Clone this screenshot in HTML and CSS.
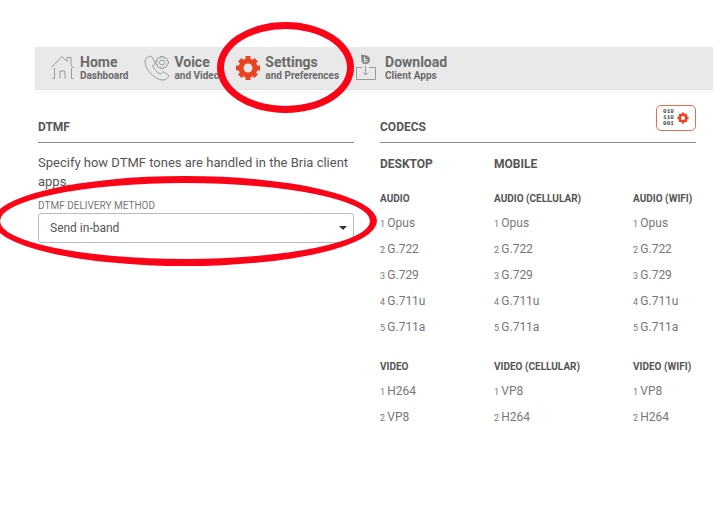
FILE: index.html
```
<!DOCTYPE html>
<html lang="en">
<head>
    <meta charset="UTF-8">
    <meta name="viewport" content="width=device-width, initial-scale=1.0">
    <title>Settings and Preferences</title>
    <link rel="stylesheet" href="styles.css">
</head>
<body>

<svg class="defs" aria-hidden="true">
    <symbol id="gear" viewBox="0 0 26 26">
        <g fill="none" stroke="currentColor">
            <circle cx="13" cy="13" r="7" stroke-width="5"/>
            <path stroke-width="5" d="M13 1v4M13 21v4M1 13h4M21 13h4"/>
            <path stroke-width="5" d="M4.800 4.800l2.500 2.500M18.700 18.700l2.500 2.500M21.200 4.800l-2.500 2.500M7.300 18.700l-2.500 2.500"/>
        </g>
    </symbol>
</svg>

<nav class="menu">
    <a class="menu-item home" href="#home">
        <svg class="icon" viewBox="0 0 26 26">
            <path d="M1.500 12.500 12 1.500l5 5V2.500h4v8l3 2.500M4.500 13v10.500M10 23.500V16h5v7.500M21.500 13v10.500M2.500 23.500h2M21.500 23.500h2"/>
        </svg>
        <span><strong>Home</strong><small>Dashboard</small></span>
    </a>
    <a class="menu-item voice" href="#voice">
        <svg class="icon" viewBox="0 0 26 26">
            <path d="M3 2.500C0 5 .5 10 4 15s9 9.500 14 10c3 .2 5-1 6.500-3.500.5-1 0-1.500-.8-2l-3.500-2.300c-1-.6-1.700-.3-2.300.4l-1.200 1.500c-4-1.500-7-5-8-8.500l1.500-1c1-.7 1.200-1.400.6-2.400L8.500 3C7.800 1.800 7 1 5.700 1.300z"/>
            <path d="M16.500 1.500h3l.4 1.800 1.600-.9 1.700 1.700-.8 1.600 2 .5v2.600l-2 .5.8 1.600-1.700 1.700-1.600-.9-.4 1.900h-3l-.4-1.900-1.600.9-1.700-1.700.8-1.600-1.800-.5V6.200l1.800-.5-.8-1.600 1.700-1.700 1.600.9z"/>
            <circle cx="18" cy="7.500" r="2.500"/>
        </svg>
        <span><strong>Voice</strong><small>and Video</small></span>
    </a>
    <a class="menu-item settings" href="#settings">
        <svg class="icon gear"><use href="#gear"/></svg>
        <span><strong>Settings</strong><small>and Preferences</small></span>
    </a>
    <a class="menu-item download" href="#download">
        <svg class="icon" viewBox="0 0 22 28">
            <path d="M7 13.500H1.500v12h19v-12H14M10.500 12v9M8 18.500l2.500 2.500 2.500-2.500"/>
            <path class="leaf" d="M6 .5c3 1.200 9 0 9 5 0 3-2 4.700-4.500 4.700S6.500 8.500 6.500 6z"/>
            <path class="leaf-mark" d="M9.500 3v5h1.700a1.300 1.300 0 0 0 0-2.500H9.500"/>
        </svg>
        <span><strong>Download</strong><small>Client Apps</small></span>
    </a>
</nav>

<main class="content">
    <section class="panel">
        <header class="panel-head">
            <h2>DTMF</h2>
        </header>
        <p class="intro">Specify how DTMF tones are handled in the Bria client apps.</p>
        <div class="field">
            <label for="delivery">DTMF DELIVERY METHOD</label>
            <select id="delivery">
                <option>Send in-band</option>
            </select>
            <svg class="caret" viewBox="0 0 8 4"><path d="M0 0h8L4 4z"/></svg>
        </div>
    </section>

    <section class="panel">
        <header class="panel-head">
            <h2>CODECS</h2>
            <button class="codec-button" type="button" aria-label="Edit codecs">
                <span class="bits">010<br>110<br>001</span>
                <svg class="small-gear"><use href="#gear"/></svg>
            </button>
        </header>
        <div class="codecs">
            <h3>DESKTOP</h3>
            <h3 class="wide">MOBILE</h3>
            <div>
                <h4>AUDIO</h4>
                <ol>
                    <li>Opus</li>
                    <li>G.722</li>
                    <li>G.729</li>
                    <li>G.711u</li>
                    <li>G.711a</li>
                </ol>
            </div>
            <div>
                <h4>AUDIO (CELLULAR)</h4>
                <ol>
                    <li>Opus</li>
                    <li>G.722</li>
                    <li>G.729</li>
                    <li>G.711u</li>
                    <li>G.711a</li>
                </ol>
            </div>
            <div>
                <h4>AUDIO (WIFI)</h4>
                <ol>
                    <li>Opus</li>
                    <li>G.722</li>
                    <li>G.729</li>
                    <li>G.711u</li>
                    <li>G.711a</li>
                </ol>
            </div>
            <div>
                <h4>VIDEO</h4>
                <ol>
                    <li>H264</li>
                    <li>VP8</li>
                </ol>
            </div>
            <div>
                <h4>VIDEO (CELLULAR)</h4>
                <ol>
                    <li>VP8</li>
                    <li>H264</li>
                </ol>
            </div>
            <div>
                <h4>VIDEO (WIFI)</h4>
                <ol>
                    <li>VP8</li>
                    <li>H264</li>
                </ol>
            </div>
        </div>
    </section>
</main>

</body>
</html>
```
FILE: styles.css
```
* {
    box-sizing: border-box;
}
body {
    margin: 0;
    padding: 47px 7px 0 35px;
    font-family: Roboto, sans-serif;
    font-size: 13px;
    color: #555;
    background-color: white;
    overflow-x: hidden;
}
h2, h3, h4, p, ol {
    margin: 0;
    padding: 0;
}
.defs {
    position: absolute;
    width: 0;
    height: 0;
}

/* top menu */
.menu {
    display: flex;
    gap: 16px;
    height: 43px;
    padding: 0 15px;
    border-bottom: 1px solid #dfdfdf;
    background-color: #e9e9e9;
    box-shadow: 0 2px 0 white, 0 3px 0 #f6f6f6;
}
.menu-item {
    position: relative;
    display: flex;
    align-items: center;
    gap: 4px;
    color: #6b6b6b;
    text-decoration: none;
    white-space: nowrap;
}
.menu-item strong,
.menu-item small {
    display: block;
    font-weight: bold;
}
.menu-item strong {
    font-size: 14px;
    line-height: 14px;
}
.menu-item small {
    font-size: 10px;
    line-height: 13px;
}
.icon {
    width: 26px;
    height: 26px;
    fill: none;
    stroke: #999;
    stroke-width: 1;
}
.icon.gear {
    color: #ea4322;
}
.menu-item.download {
    gap: 8px;
}
.download .icon {
    width: 22px;
    height: 28px;
}
.icon .leaf {
    fill: #858585;
    stroke: none;
}
.icon .leaf-mark {
    stroke: #e9e9e9;
}

/* red rings */
.settings::after,
.field::after {
    content: "";
    position: absolute;
    z-index: 1;
    border: 7px solid #fb0418;
    border-radius: 50%;
    pointer-events: none;
}
.settings::after {
    inset: -25px -15px -24px -18px;
}
.field::after {
    inset: -15px -23px -23px -45px;
}

/* panels */
.content {
    display: grid;
    grid-template-columns: 1fr 1fr;
    gap: 26px;
    padding: 13px 17px 0 3px;
}
.panel-head {
    display: flex;
    justify-content: space-between;
    height: 40px;
    border-bottom: 1px solid #888;
}
.panel-head h2 {
    padding-top: 16px;
    font-size: 12px;
    line-height: 16px;
}
.intro {
    padding-top: 10px;
    font-size: 13px;
    line-height: 19px;
}
.field {
    position: relative;
    padding-top: 7px;
}
.field label {
    display: block;
    font-size: 10px;
    line-height: 15px;
    color: #777;
}
.field select {
    display: block;
    width: 100%;
    height: 30px;
    padding: 0 11px;
    border: 1px solid #bbb;
    border-radius: 3px;
    background-color: white;
    font-family: inherit;
    font-size: 12px;
    color: #555;
    appearance: none;
}
.caret {
    position: absolute;
    right: 7px;
    bottom: 13px;
    width: 8px;
    height: 4px;
    fill: #333;
}

/* codecs */
.codec-button {
    display: flex;
    align-items: center;
    justify-content: center;
    gap: 3px;
    width: 40px;
    height: 26px;
    margin-top: 2px;
    padding: 0;
    border: 1px solid #e2704f;
    border-radius: 5px;
    background-color: white;
}
.bits {
    font-family: "Liberation Mono", monospace;
    font-size: 6px;
    font-weight: bold;
    line-height: 6px;
    color: #444;
}
.small-gear {
    width: 12px;
    height: 12px;
    color: #ea4322;
}
.codecs {
    display: grid;
    grid-template-columns: 114fr 139fr 63fr;
    row-gap: 13px;
    padding-top: 12px;
    white-space: nowrap;
}
.codecs h3 {
    font-size: 12px;
    line-height: 18px;
}
.codecs .wide {
    grid-column: span 2;
}
.codecs h4 {
    font-size: 10px;
    line-height: 25px;
}
.codecs ol {
    list-style: none;
    counter-reset: codec;
}
.codecs li {
    counter-increment: codec;
    font-size: 12px;
    line-height: 25px;
    color: #777;
}
.codecs li::before {
    content: counter(codec) " ";
    font-size: 9px;
}
```
